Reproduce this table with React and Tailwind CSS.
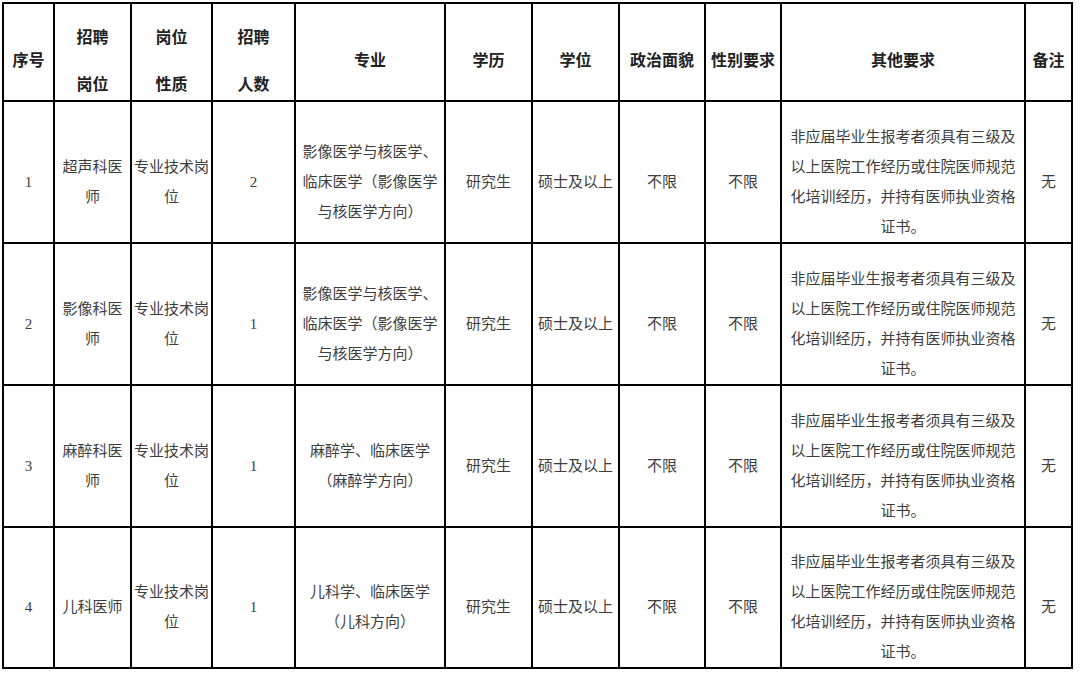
import React from "react";

const colClasses = [
  "w-[51px]",
  "w-[77px]",
  "w-[81px]",
  "w-[83px]",
  "w-[150px]",
  "w-[87px]",
  "w-[87px]",
  "w-[86px]",
  "w-[76px]",
  "w-[244px]",
  "w-[47px]",
];

const other = "非应届毕业生报考者须具有三级及以上医院工作经历或住院医师规范化培训经历，并持有医师执业资格证书。";

const rows = [
  {
    no: "1",
    post: "超声科医师",
    count: "2",
    major: "影像医学与核医学、临床医学（影像医学与核医学方向）",
  },
  {
    no: "2",
    post: "影像科医师",
    count: "1",
    major: "影像医学与核医学、临床医学（影像医学与核医学方向）",
  },
  {
    no: "3",
    post: "麻醉科医师",
    count: "1",
    majorLines: ["麻醉学、临床医学", "（麻醉学方向）"],
  },
  {
    no: "4",
    post: "儿科医师",
    count: "1",
    majorLines: ["儿科学、临床医学", "（儿科方向）"],
  },
];

function Th({ children }) {
  return (
    <th className="border-2 border-black align-middle text-center font-bold text-[16px] text-[#222] pt-[18px] pb-0 px-0 leading-[20px]">
      {children}
    </th>
  );
}

function Th2({ a, b }) {
  return (
    <Th>
      <div>{a}</div>
      <div className="mt-[27px]">{b}</div>
    </Th>
  );
}

function Td({ children, px = "px-[2px]" }) {
  return (
    <td className={`border-2 border-black align-middle text-center text-[15px] leading-[30px] text-[#3d3d3d] pt-[19px] pb-0 ${px}`}>
      {children}
    </td>
  );
}

export default function App() {
  return (
    <div
      className="bg-white w-[1080px] h-[675px] pl-[2px] pt-[2px] overflow-hidden"
      style={{ fontFamily: "'Liberation Serif', 'Noto Sans CJK SC', sans-serif" }}
    >
      <table className="border-collapse table-fixed w-[1071px]">
        <colgroup>
          {colClasses.map((c, i) => (
            <col key={i} className={c} />
          ))}
        </colgroup>
        <thead>
          <tr className="h-[98px]">
            <Th>序号</Th>
            <Th2 a="招聘" b="岗位" />
            <Th2 a="岗位" b="性质" />
            <Th2 a="招聘" b="人数" />
            <Th>专业</Th>
            <Th>学历</Th>
            <Th>学位</Th>
            <Th>政治面貌</Th>
            <Th>性别要求</Th>
            <Th>其他要求</Th>
            <Th>备注</Th>
          </tr>
        </thead>
        <tbody>
          {rows.map((r, i) => (
            <tr key={i} className={i === 3 ? "h-[141px]" : "h-[142px]"}>
              <Td>{r.no}</Td>
              <Td>{r.post}</Td>
              <Td>专业技术岗位</Td>
              <Td>{r.count}</Td>
              <Td px="px-[4px]">
                {r.majorLines
                  ? r.majorLines.map((l, j) => <div key={j}>{l}</div>)
                  : r.major}
              </Td>
              <Td>研究生</Td>
              <Td>硕士及以上</Td>
              <Td>不限</Td>
              <Td>不限</Td>
              <Td px="px-[4px]">{other}</Td>
              <Td>无</Td>
            </tr>
          ))}
        </tbody>
      </table>
    </div>
  );
}
